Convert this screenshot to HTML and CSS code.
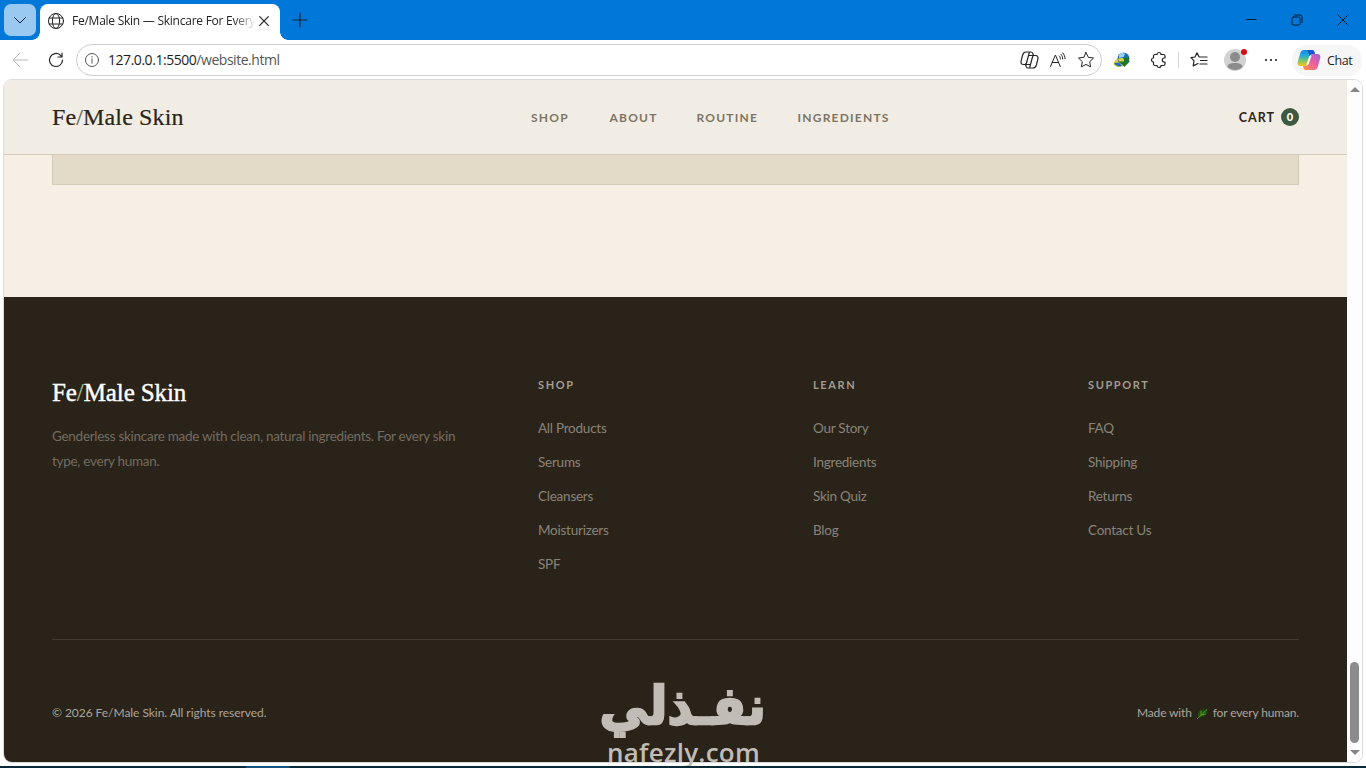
FILE: index.html
```html
<!DOCTYPE html>
<html lang="en">
<head>
<meta charset="utf-8">
<title>Fe/Male Skin — Skincare For Every Human</title>
<link rel="stylesheet" href="styles.css">
</head>
<body>
<div class="browser">
  <div class="titlebar">
    <div class="tab-menu"><svg width="14" height="14" viewBox="0 0 14 14"><path d="M1.500 4.500 7 10l5.500-5.500" class="line"/></svg></div>
    <div class="tab">
      <svg class="globe" width="18" height="18" viewBox="0 0 18 18"><g class="line"><circle cx="9" cy="9" r="7.500"/><ellipse cx="9" cy="9" rx="3.600" ry="7.500"/><path d="M2.200 6h13.600M2.200 12h13.600"/></g></svg>
      <span class="tab-title">Fe/Male Skin — Skincare For Every</span>
      <svg width="12" height="12" viewBox="0 0 12 12"><path class="line strong" d="m1.700 1.700 8.600 8.600m0-8.600-8.600 8.600"/></svg>
    </div>
    <svg class="new-tab" width="16" height="16" viewBox="0 0 16 16"><path class="line strong" d="M8 1v14M1 8h14"/></svg>
    <div class="window-buttons">
      <svg width="12" height="12" viewBox="0 0 12 12"><path class="line" d="M1 5.500h10"/></svg>
      <svg width="12" height="12" viewBox="0 0 12 12"><g class="line"><rect x="1" y="3" width="8" height="8" rx="1.500"/><path d="M3.500 1H9a2 2 0 0 1 2 2v5.500"/></g></svg>
      <svg width="12" height="12" viewBox="0 0 12 12"><path class="line" d="m1 1 10 10m0-10L1 11"/></svg>
    </div>
  </div>
  <div class="toolbar">
    <svg class="back" width="18" height="16" viewBox="0 0 18 16"><path class="line" d="M17 8H2m7-7L2 8l7 7"/></svg>
    <svg class="reload" width="16" height="16" viewBox="0 0 16 16"><path class="line strong" d="M14.500 8A6.500 6.500 0 1 1 12.300 3.100L14 4.800M14 1v4h-4"/></svg>
    <div class="address">
      <svg class="info" width="16" height="16" viewBox="0 0 16 16"><g class="line"><circle cx="8" cy="8" r="6.500"/><path d="M8 7v4.200M8 4.500v.6"/></g></svg>
      <span class="url">127.0.0.1:5500<span class="path">/website.html</span></span>
      <div class="address-icons">
        <svg width="19" height="18" viewBox="0 0 19 18"><g class="line strong"><path d="M6 13.500H3.500C1.300 13.500.7 12 1.100 10.200L2.600 4c.6-2 1.500-3 3.400-3h5c1.300 0 1.800.8 2 2l.4 1.500"/><path d="M13 4.500h2.500c2.200 0 2.800 1.500 2.400 3.300L16.400 14c-.6 2-1.500 3-3.400 3H8c-1.300 0-1.800-.8-2-2l-.4-1.500"/><path d="M9.300 1.500 6.500 12c-.3 1-.8 1.500-1.800 1.500M9.700 16.500 12.500 6c.3-1 .8-1.500 1.800-1.500M8.700 4.500H13M6 13.500h4.300"/></g></svg>
        <svg width="18" height="16" viewBox="0 0 18 16"><path class="line" d="M1.500 14.500 6.400 3l4.900 11.500M3.200 10.500h6.400M10.300 4c.8.800 1.100 1.700 1.100 3M12 2.400c1.200 1.300 1.700 2.800 1.700 4.600M13.700.8C15.300 2.500 16 4.500 16 6.800"/></svg>
        <svg width="18" height="18" viewBox="0 0 18 18"><path class="line" d="m9 1.500 2.300 4.800 5.200.7-3.800 3.700.9 5.200L9 13.400l-4.600 2.500.9-5.200L1.500 7l5.200-.7z"/></svg>
      </div>
    </div>
    <svg class="idm" width="18" height="18" viewBox="0 0 18 18"><ellipse cx="8" cy="11" rx="7.500" ry="4.500" fill="#e9c83c" transform="rotate(-18 8 11)"/><path d="M1.200 12c1 3 5 4 8 3L6 11.500z" fill="#1b6fc0"/><circle cx="10.500" cy="7.500" r="6" fill="#246fbd"/><path d="M6 4c2-2.500 4-2.500 6-1.500L10.500 6 6 7z" fill="#9dd3ef"/><path d="M5 8c3-2 6-1 6 1v3H7z" fill="#ddd03f"/><path d="M11 6.500h5V10h1l-5.500 6L6 10.500h5z" fill="#1f752b"/></svg>
    <svg class="puzzle" width="18" height="18" viewBox="0 0 18 18"><path class="line strong" d="M5 3.500h2a2 2 0 0 1 4 0h2.500a1.500 1.500 0 0 1 1.500 1.500v2h-.7a2 2 0 0 0 0 4h.7v2a1.500 1.500 0 0 1-1.500 1.500H11a2 2 0 0 1-4 0H5A1.500 1.500 0 0 1 3.500 13v-2a2 2 0 0 1 0-4V5A1.500 1.500 0 0 1 5 3.500z"/></svg>
    <span class="separator"></span>
    <svg class="favorites" width="18" height="18" viewBox="0 0 18 18"><path class="line strong" d="M9 5.800 7 1.800 5 6l-4 .7 3 3.200-.8 5L8 12.500M9.500 6h7.500M10.500 9.500H17M10 13h7"/></svg>
    <div class="avatar"><svg width="22" height="22" viewBox="0 0 22 22"><circle cx="11" cy="11" r="11" fill="#d2d2d2"/><circle cx="11" cy="8" r="5" fill="#8c8c8c"/><path d="M3.500 18c0-3 3-4 7.500-4s7.500 1 7.500 4c-4 4-11 4-15 0z" fill="#8c8c8c"/></svg><i></i></div>
    <svg class="more" width="14" height="4" viewBox="0 0 14 4"><circle cx="2" cy="2" r="1.100"/><circle cx="7" cy="2" r="1.100"/><circle cx="12" cy="2" r="1.100"/></svg>
    <div class="chat">
      <svg width="24" height="22" viewBox="0 0 24 22"><defs><linearGradient id="cool" x1="0" y1="0" x2="0" y2="1"><stop stop-color="#1687e5"/><stop offset=".35" stop-color="#24a9dc"/><stop offset=".65" stop-color="#7bc46b"/><stop offset="1" stop-color="#f6c51a"/></linearGradient><linearGradient id="warm" x1="1" y1="0" x2="0" y2="1"><stop stop-color="#a260e8"/><stop offset=".5" stop-color="#ed609b"/><stop offset="1" stop-color="#ff9440"/></linearGradient></defs><path d="M7 1h8c2 0 2 1 3 4h-2c-2 0-3 1-4 4l-2 6c-.5 1.500-1 2-3 2H4c-3 0-4-2-3-5L3 5c.8-3 2-4 4-4z" fill="url(#cool)"/><path d="M10 1h5c2 0 2 1 3 4h-2c-2 0-3 1-3.500 2C12 4 11 2 10 1z" fill="#1459ca"/><path d="M17 21H9c-2 0-2-1-3-4h2c2 0 3-1 4-4l2-6c.5-1.500 1-2 3-2h3c3 0 4 2 3 5l-2 7c-.8 3-2 4-4 4z" fill="url(#warm)"/><path d="M12.500 7h2l-3 8.500H9.300z" fill="#f6f6f6"/></svg>
      <span>Chat</span>
    </div>
  </div>
  <div class="viewport">
    <div class="page">
      <header class="site-header">
        <div class="logo">Fe<em>/</em>Male Skin</div>
        <nav><a>SHOP</a><a>ABOUT</a><a>ROUTINE</a><a>INGREDIENTS</a></nav>
        <div class="cart"><span>CART</span><b>0</b></div>
      </header>
      <section class="panel-section"><div class="panel"></div></section>
      <footer>
        <div class="columns">
          <div class="brand"><div class="footer-logo">Fe<em>/</em>Male Skin</div><p>Genderless skincare made with clean, natural ingredients. For every skin<br>type, every human.</p></div>
          <div class="col"><h4>SHOP</h4><a>All Products</a><a>Serums</a><a>Cleansers</a><a>Moisturizers</a><a>SPF</a></div>
          <div class="col"><h4>LEARN</h4><a>Our Story</a><a>Ingredients</a><a>Skin Quiz</a><a>Blog</a></div>
          <div class="col"><h4>SUPPORT</h4><a>FAQ</a><a>Shipping</a><a>Returns</a><a>Contact Us</a></div>
        </div>
        <div class="legal">
          <span>© 2026 Fe/Male Skin. All rights reserved.</span>
          <span class="made">Made with <svg width="13" height="13" viewBox="0 0 13 13"><path d="M2 10C1 6 3 5 5 2l1.500 2L8 1.500 8.500 4 12 1l-1.500 4 1.500.5L9 7 8 9 4 10.500z" fill="#1d5212"/><path d="m1 12 10-9.500M5 8V4m0 4 5-1" fill="none" stroke="#5a9e20" stroke-width=".9"/></svg> for every human.</span>
        </div>
      </footer>
    </div>
    <div class="scrollbar"><i class="up"></i><div><i class="thumb"></i></div><i class="down"></i></div>
  </div>
  <div class="watermark"><div class="arabic" lang="ar" dir="rtl">نفـذلي</div><div class="domain">nafezly.com</div></div>
  <div class="taskbar"><i></i></div>
</div>
</body>
</html>
```
FILE: styles.css
```css
* { box-sizing: border-box; }
body { margin: 0; width: 1366px; height: 768px; overflow: hidden; background: #fff; font-family: Lato, sans-serif; }
svg { display: block; flex: none; }
.line { fill: none; stroke: currentColor; stroke-width: 1; stroke-linecap: round; stroke-linejoin: round; }
.strong { stroke-width: 1.2; }
.browser { position: relative; height: 768px; display: flex; flex-direction: column; color: #242424; }
.titlebar { height: 40px; flex: none; background: #0078da; display: flex; align-items: center; padding-left: 4px; color: #10243b; }
.tab-menu { width: 32px; height: 32px; border-radius: 7px; background: #99c9f0; display: grid; place-items: center; margin-right: 4px; }
.tab { position: relative; align-self: flex-end; width: 240px; height: 36px; display: flex; align-items: center; padding: 0 10px 3px 7px; background: #fff; border-radius: 8px 8px 0 0; color: #222; }
.tab::before, .tab::after { content: ""; position: absolute; bottom: 0; width: 8px; height: 8px; }
.tab::before { left: -8px; background: radial-gradient(circle at 0 0, transparent 7.5px, #fff 8px); }
.tab::after { right: -8px; background: radial-gradient(circle at 100% 0, transparent 7.5px, #fff 8px); }
.tab-title { width: 182px; margin: 0 4px 0 7px; white-space: nowrap; font: 12px/18px "Open Sans", sans-serif; letter-spacing: -.25px; -webkit-mask-image: linear-gradient(90deg, #000 162px, transparent 184px); }
.new-tab { margin-left: 12px; }
.window-buttons { margin-left: auto; display: flex; gap: 34px; padding-right: 17px; color: #071a2e; }
.toolbar { height: 40px; flex: none; display: flex; align-items: center; padding-left: 11px; }
.back { color: #bbb; }
.reload { margin-left: 19px; }
.address { width: 1026px; height: 32px; margin-left: 12px; display: flex; align-items: center; border: 1px solid #cfcfcf; border-radius: 16px; padding: 0 6px 0 7px; }
.info { color: #555; }
.url { margin-left: 8px; font: 14px/20px "Open Sans", sans-serif; letter-spacing: -.46px; color: #1c1c1c; }
.path { color: #555; }
.address-icons { margin-left: auto; display: flex; align-items: center; gap: 10px; }
.idm { margin-left: 11px; }
.puzzle { margin-left: 19px; }
.separator { width: 1px; height: 16px; background: #d6d6d6; margin-left: 10px; }
.favorites { margin-left: 11px; }
.avatar { position: relative; margin-left: 16px; }
.avatar i { position: absolute; right: -1px; top: 0; width: 6px; height: 6px; border-radius: 50%; background: #d80c0c; }
.more { margin-left: 18px; fill: #222; }
.chat { display: flex; align-items: center; gap: 6px; width: 70px; height: 31px; margin-left: 14px; padding-left: 5px; border-radius: 15px; background: #f6f6f6; font: 12.5px "Open Sans", sans-serif; letter-spacing: -.4px; }
.viewport { height: 684px; width: 1360px; margin: -1px 0 0 3px; flex: none; display: flex; border: 1px solid #dcdcdc; border-radius: 9px; overflow: hidden; }
.page { width: 1343px; flex: none; display: flex; flex-direction: column; background: #f5efe6; }
.site-header { height: 75px; display: flex; align-items: center; justify-content: space-between; padding: 0 48px; background: #f2ede4; border-bottom: 1px solid #d3ccba; flex: none; }
.logo, .footer-logo { font-family: "Liberation Serif", serif; white-space: nowrap; }
.logo { width: 479px; font-size: 24px; line-height: 30px; letter-spacing: .14px; color: #2a2419; -webkit-text-stroke: .2px #2a2419; }
em { font-style: normal; color: #6d7a65; }
nav { flex: 1; display: grid; grid-template-columns: 78.5px 87px 101px 100px; color: #7c7565; font-weight: 700; font-size: 12px; line-height: 18px; letter-spacing: 1.22px; padding-top: 1px; }
.cart { display: flex; gap: 6px; align-items: center; color: #2a2419; font-size: 12.5px; font-weight: 700; letter-spacing: 1px; }
.cart b { width: 18px; height: 18px; border-radius: 50%; background: #3d5a40; color: #fff; text-align: center; font-size: 11px; line-height: 18px; letter-spacing: 0; }
.panel-section { height: 142px; flex: none; padding: 0 48px; }
.panel { height: 30px; background: #e3dbc8; border: 1px solid #d3ccb6; border-top: 0; }
footer { flex: 1; background: #2a2319; padding: 80px 48px 0; }
.columns { height: 263px; display: grid; grid-template-columns: 2fr 1fr 1fr 1fr; column-gap: 64px; border-bottom: 1px solid #403a30; }
.footer-logo { color: #fff; font-size: 25px; line-height: 32px; letter-spacing: -.1px; -webkit-text-stroke: .4px #fff; }
.footer-logo em { color: #a8bd95; -webkit-text-stroke: .2px #a8bd95; }
.brand p { margin: 15px 0 0; color: #736c61; font-size: 13.5px; line-height: 25px; letter-spacing: -.28px; white-space: nowrap; }
h4 { margin: 0 0 25px; font-size: 11px; line-height: 16px; letter-spacing: 1.6px; color: #a29c91; }
.col a { display: block; font-size: 13.5px; line-height: 20px; margin-bottom: 14px; color: #89837a; letter-spacing: -.24px; }
.legal { display: flex; justify-content: space-between; margin-top: 63px; color: #aba59c; font-size: 12px; line-height: 20px; letter-spacing: -.05px; }
.made { display: flex; align-items: center; gap: 4px; letter-spacing: -.15px; }
.scrollbar { width: 15px; display: flex; flex-direction: column; align-items: center; justify-content: space-between; padding: 7px 0; background: #fdfdfd; }
.scrollbar > div { flex: 1; display: flex; align-items: flex-end; padding-bottom: 7px; }
.up, .down { border: 5px solid transparent; height: 5px; }
.up { border-top: 0; border-bottom-color: #858585; }
.down { border-bottom: 0; border-top-color: #858585; }
.thumb { width: 9px; height: 81px; border-radius: 5px; background: #8b8b8b; }
.watermark { position: absolute; left: 598px; top: 676px; width: 170px; height: 92px; color: #c1bcb5; white-space: nowrap; }
.arabic { position: absolute; right: 2px; top: -1px; font: 700 52px/62px "DejaVu Sans", sans-serif; -webkit-text-stroke: 2.4px #c1bcb5; transform: scaleX(.94); transform-origin: right; }
.domain { position: absolute; left: 9px; top: 61px; font: 600 26px/30px "Open Sans", sans-serif; letter-spacing: .25px; }
.taskbar { position: absolute; left: 0; right: 0; bottom: 0; height: 2px; background: #092a38; }
.taskbar i { position: absolute; left: 246px; width: 44px; height: 2px; background: #15517e; }
```
